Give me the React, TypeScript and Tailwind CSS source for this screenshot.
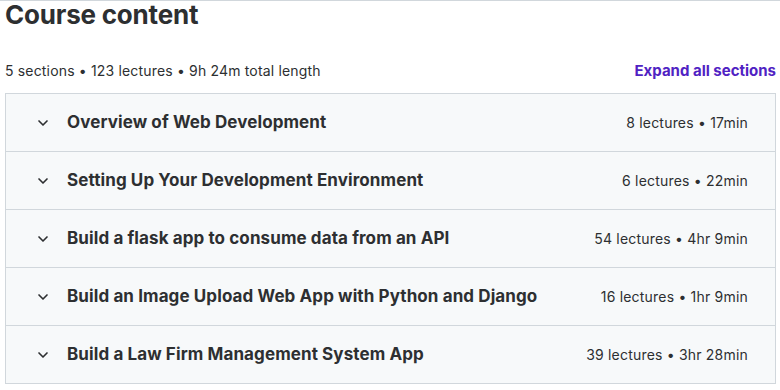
import { ChevronDown } from "lucide-react";

const sections = [
  { title: "Overview of Web Development", meta: "8 lectures • 17min" },
  { title: "Setting Up Your Development Environment", meta: "6 lectures • 22min" },
  { title: "Build a flask app to consume data from an API", meta: "54 lectures • 4hr 9min" },
  { title: "Build an Image Upload Web App with Python and Django", meta: "16 lectures • 1hr 9min" },
  { title: "Build a Law Firm Management System App", meta: "39 lectures • 3hr 28min" },
];

export default function App() {
  return (
    <div className="h-[390px] w-[780px] overflow-hidden border-t border-[#d1d7dc] bg-white pl-[5px] pr-[3px] font-['Inter',sans-serif] text-[#2d2f31]">
      <h2 className="text-[26px] font-bold leading-[28px] tracking-[-0.2px]">Course content</h2>

      <div className="mt-[32px] flex items-center justify-between pr-[1px] text-[14px] leading-[20px]">
        <span className="tracking-[0.17px]">5 sections • 123 lectures • 9h 24m total length</span>
        <button className="text-[15px] font-bold text-[#5022c3]">Expand all sections</button>
      </div>

      {/* section list */}
      <div className="mt-[12px] mr-[1px] border border-[#d1d7dc] bg-[#f7f9fa]">
        {sections.map((s, i) => (
          <div
            key={s.title}
            className={`flex items-center pl-[29px] pr-[27px] ${
              i < sections.length - 1 ? "h-[58px] border-b border-[#d1d7dc]" : "h-[57px]"
            }`}
          >
            <ChevronDown size={16} strokeWidth={2.5} className="shrink-0" />
            <span className="ml-[16px] flex-1 text-[17px] font-bold tracking-[0.1px]">{s.title}</span>
            <span className="text-[14px] tracking-[0.2px]">{s.meta}</span>
          </div>
        ))}
      </div>
    </div>
  );
}
